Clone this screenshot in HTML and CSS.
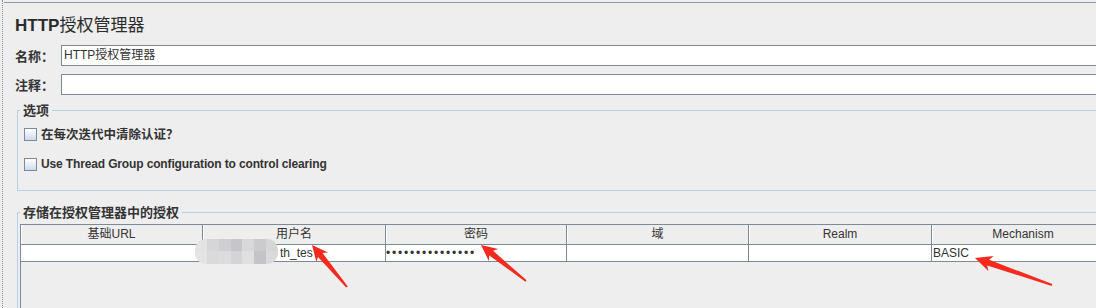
FILE: index.html
```html
<!DOCTYPE html>
<html lang="zh-CN">
<head>
<meta charset="utf-8">
<title>HTTP授权管理器</title>
<link rel="stylesheet" href="styles.css">
</head>
<body>
<div class="frame">
  <div class="panel">
    <h1 class="title">HTTP<span class="title-cjk">授权管理器</span></h1>
    <div class="field-row first">
      <label class="field-label">名称：</label>
      <div class="field-input">HTTP授权管理器</div>
    </div>
    <div class="field-row">
      <label class="field-label">注释：</label>
      <div class="field-input"></div>
    </div>
    <fieldset class="group options">
      <legend class="group-title">选项</legend>
      <div class="check-row"><span class="checkbox"></span><span class="check-text cjk">在每次迭代中清除认证？</span></div>
      <div class="check-row"><span class="checkbox"></span><span class="check-text">Use Thread Group configuration to control clearing</span></div>
    </fieldset>
    <fieldset class="group auth">
      <legend class="group-title">存储在授权管理器中的授权</legend>
      <div class="table-pane">
        <div class="table-row head">
          <div class="cell">基础URL</div>
          <div class="cell">用户名</div>
          <div class="cell">密码</div>
          <div class="cell">域</div>
          <div class="cell">Realm</div>
          <div class="cell">Mechanism</div>
        </div>
        <div class="table-row data">
          <div class="cell"></div>
          <div class="cell user">th_tes</div>
          <div class="cell pass">•••••••••••••••</div>
          <div class="cell"></div>
          <div class="cell"></div>
          <div class="cell">BASIC</div>
        </div>
      </div>
    </fieldset>
  </div>
</div>
<div class="mosaic">
  <span class="m1"></span><span class="m2"></span><span class="m3"></span><span class="m4"></span><span class="m5"></span><span class="m6"></span><span class="m7"></span>
  <span class="m8"></span><span class="m9"></span><span class="m10"></span><span class="m11"></span><span class="m12"></span><span class="m13"></span><span class="m14"></span>
</div>
<svg class="marks" width="1096" height="308" viewBox="0 0 1096 308">
  <polygon points="312,245 328,252.5 322.6,253.1 347.8,286.4 346.2,287.6 318,256.9 316.4,262.1"/>
  <polygon points="481,245 498.2,249.1 493.1,250.8 526.6,280.2 525.4,281.8 489.3,255.4 488.8,260.9"/>
  <polygon points="975,258 993.6,256.1 989.2,259.8 1052.3,284.1 1051.7,285.9 987.2,265.4 988.4,271.1"/>
</svg>
</body>
</html>
```

FILE: styles.css
```css
html, body {
  margin: 0;
  padding: 0;
  width: 1096px;
  height: 308px;
  overflow: hidden;
  background: #eeeeee;
  font-family: "Liberation Sans", "Noto Sans CJK SC", sans-serif;
  color: #333333;
}

.frame {
  margin-left: 2px;
  padding-top: 2px;
  height: 308px;
  box-sizing: border-box;
  border-left: 1px dotted #8a8f96;
}

.panel {
  margin-left: 1px;
  height: 306px;
  border-top: 1px solid #8e99a4;
  padding-left: 11px;
  box-sizing: border-box;
  display: flex;
  flex-direction: column;
}

.title {
  margin: 11px 0 0;
  font-size: 17px;
  line-height: 20px;
  font-weight: bold;
  color: #2b2b2b;
}

.title-cjk {
  font-weight: normal;
  font-family: "Noto Sans CJK SC", sans-serif;
}

.field-row {
  display: flex;
  align-items: center;
  height: 21px;
  margin-top: 8px;
  flex: none;
}

.field-row.first {
  margin-top: 9px;
}

.field-label {
  width: 46px;
  flex: none;
  font-family: "Noto Sans CJK SC", sans-serif;
  font-size: 13px;
  font-weight: bold;
  line-height: 16px;
}

.field-input {
  flex: 1;
  height: 21px;
  box-sizing: border-box;
  border: 1px solid #7a8a99;
  border-right: none;
  background: #ffffff;
  padding-left: 2px;
  font-size: 12px;
  line-height: 19px;
  color: #333333;
}

.group {
  margin: 0 0 0 2px;
  padding: 0 0 0 2px;
  border: 1px solid #b8cfe5;
  border-right: none;
  min-width: 0;
}

.group-title {
  padding: 0 3px;
  font-family: "Noto Sans CJK SC", sans-serif;
  font-size: 13px;
  font-weight: bold;
  line-height: 16px;
  color: #333333;
}

.options {
  margin-top: 7px;
  padding-top: 6px;
  padding-bottom: 16px;
  display: flex;
  flex-direction: column;
  gap: 10px;
  flex: none;
}

.check-row {
  display: flex;
  align-items: center;
  height: 20px;
  margin-left: 4px;
}

.checkbox {
  width: 13px;
  height: 13px;
  box-sizing: border-box;
  border: 1px solid #7a8a99;
  background: linear-gradient(to bottom, #ffffff 0%, #e6edf5 50%, #cddbea 100%);
  flex: none;
}

.check-text {
  margin-left: 4px;
  font-size: 12px;
  font-weight: bold;
  line-height: 16px;
  letter-spacing: -0.14px;
}

.check-text.cjk {
  font-family: "Noto Sans CJK SC", sans-serif;
  font-size: 12.5px;
  letter-spacing: 0;
}

.auth {
  margin-top: 13px;
  padding-top: 4px;
  border-bottom: none;
  flex: 1;
  display: flex;
  flex-direction: column;
}

.table-pane {
  flex: 1;
  border-left: 1px solid #7a8a99;
  border-top: 1px solid #7a8a99;
}

.table-row {
  display: grid;
  grid-template-columns: 182px 183px 181px 182px 183px 1fr;
  border-bottom: 1px solid #7a8a99;
}

.cell {
  box-sizing: border-box;
  border-right: 1px solid #7a8a99;
  font-size: 12px;
  white-space: nowrap;
  overflow: hidden;
}

.cell:last-child {
  border-right: none;
}

.head .cell {
  height: 19px;
  line-height: 19px;
  text-align: center;
  background: #eeeeee;
  box-shadow: inset 1px 0 0 #ffffff;
}

.head .cell:last-child {
  padding-left: 18px;
}

.data .cell {
  height: 16px;
  line-height: 16px;
  background: #ffffff;
  padding-left: 1px;
}

.data .cell.user {
  padding-left: 77px;
}

.data .cell.pass {
  letter-spacing: 1.8px;
  padding-left: 0;
}

.mosaic {
  position: absolute;
  left: 195px;
  top: 239px;
  width: 83px;
  height: 25px;
  border-radius: 11px;
  overflow: hidden;
  display: grid;
  grid-template-columns: repeat(7, 1fr);
  grid-template-rows: 12px 13px;
  filter: blur(0.5px);
}

.m1 { background: #e3e3e4; }
.m2 { background: #d6d6d8; }
.m3 { background: #cfcfd3; }
.m4 { background: #c6c6ca; }
.m5 { background: #d8d8da; }
.m6 { background: #cbcbce; }
.m7 { background: #d6d6d8; }
.m8 { background: #e4e4e4; }
.m9 { background: #dadadb; }
.m10 { background: #dcdcde; }
.m11 { background: #d4d4d6; }
.m12 { background: #e0e0e1; }
.m13 { background: #c4c4c8; }
.m14 { background: #dadadb; }

.marks {
  position: absolute;
  left: 0;
  top: 0;
  pointer-events: none;
}

.marks polygon {
  fill: #f52a1f;
}
```
